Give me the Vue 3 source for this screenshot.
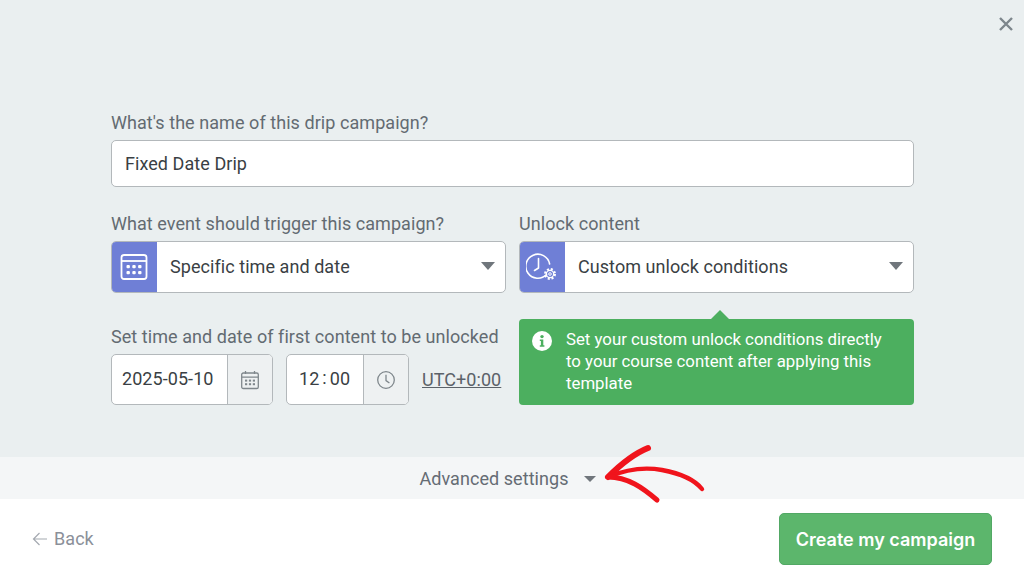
<script setup>
const fields = {
  name: 'Fixed Date Drip',
  trigger: 'Specific time and date',
  unlock: 'Custom unlock conditions',
  date: '2025-05-10',
  zone: 'UTC+0:00',
};
</script>

<template>
  <div class="modal">
    <svg class="close" viewBox="0 0 16 16" width="16" height="16">
      <path d="M2 2l12 12M14 2L2 14" stroke="#7d868c" stroke-width="2.4" fill="none" />
    </svg>

    <main class="body">
      <div class="field">
        <label class="label">What's the name of this drip campaign?</label>
        <div class="box name-input">{{ fields.name }}</div>
      </div>

      <div class="columns">
        <div class="field">
          <label class="label">What event should trigger this campaign?</label>
          <div class="box select">
            <span class="select-icon">
              <svg viewBox="0 0 28 28" width="28" height="28" fill="none" stroke="#fff" stroke-width="1.8">
                <rect x="1.5" y="2" width="25" height="24" rx="2.5" />
                <path d="M1.5 8h25" />
                <g fill="#fff" stroke="none">
                  <rect x="6.5" y="12" width="3.4" height="3.2" rx="1" />
                  <rect x="12.3" y="12" width="3.4" height="3.2" rx="1" />
                  <rect x="18.1" y="12" width="3.4" height="3.2" rx="1" />
                  <rect x="6.5" y="18" width="3.4" height="3.2" rx="1" />
                  <rect x="12.3" y="18" width="3.4" height="3.2" rx="1" />
                  <rect x="18.1" y="18" width="3.4" height="3.2" rx="1" />
                </g>
              </svg>
            </span>
            <span class="select-text">{{ fields.trigger }}</span>
            <span class="caret"></span>
          </div>
        </div>
        <div class="field">
          <label class="label">Unlock content</label>
          <div class="box select">
            <span class="select-icon">
              <svg viewBox="0 0 32 28" width="32" height="28" fill="none" stroke="#fff" stroke-width="1.6">
                <path d="M20.5 21.5A12 12 0 1 1 23.6 11" stroke-linecap="round" />
                <path d="M12.5 5.5v9.5l-4 2.5" stroke-linecap="round" stroke-linejoin="round" />
                <circle cx="24" cy="21" r="4.8" stroke-width="2.4" stroke-dasharray="2 1.8" />
                <circle cx="24" cy="21" r="3.6" stroke-width="1.2" />
                <circle cx="24" cy="21" r="1.3" stroke-width="1" />
              </svg>
            </span>
            <span class="select-text">{{ fields.unlock }}</span>
            <span class="caret"></span>
          </div>
        </div>
      </div>

      <div class="columns last">
        <div class="field">
          <label class="label">Set time and date of first content to be unlocked</label>
          <div class="when">
            <div class="box stamp date">
              <span class="stamp-value">{{ fields.date }}</span>
              <span class="stamp-icon">
                <svg viewBox="0 0 20 20" width="20" height="20" fill="none" stroke="#7f878c" stroke-width="1.3">
                  <rect x="1.7" y="3" width="16.6" height="15.5" rx="1.6" />
                  <path d="M1.7 7.2h16.6M5.5 1v3M14.5 1v3" />
                  <g fill="#7f878c" stroke="none">
                    <rect x="5" y="9.6" width="2.2" height="2" />
                    <rect x="8.9" y="9.6" width="2.2" height="2" />
                    <rect x="12.8" y="9.6" width="2.2" height="2" />
                    <rect x="5" y="13.2" width="2.2" height="2" />
                    <rect x="8.9" y="13.2" width="2.2" height="2" />
                    <rect x="12.8" y="13.2" width="2.2" height="2" />
                  </g>
                </svg>
              </span>
            </div>
            <div class="box stamp time">
              <span class="stamp-value">12<i class="colon">:</i>00</span>
              <span class="stamp-icon">
                <svg viewBox="0 0 20 20" width="20" height="20" fill="none" stroke="#7f878c" stroke-width="1.3">
                  <circle cx="10" cy="10" r="8.3" />
                  <path d="M10 4.8V10.6l3.4 2.4" />
                </svg>
              </span>
            </div>
            <a class="zone">{{ fields.zone }}</a>
          </div>
        </div>
        <div class="notice">
          <svg class="notice-icon" viewBox="0 0 20 20" width="20" height="20">
            <circle cx="10" cy="10" r="10" fill="#fff" />
            <circle cx="10" cy="5.6" r="1.7" fill="#4caf5f" />
            <path d="M7.8 8.6h3.5v5.6h1.1v1.5H7.8v-1.5h1.1V10.1H7.8z" fill="#4caf5f" />
          </svg>
          <p class="notice-text">Set your custom unlock conditions directly to your course content after applying this template</p>
        </div>
      </div>
    </main>

    <div class="advanced">
      <span>Advanced settings</span>
      <span class="caret small"></span>
    </div>

    <footer class="footer">
      <a class="back">
        <svg viewBox="0 0 16 14" width="16" height="14" fill="none" stroke="#a4a9b0" stroke-width="1.2">
          <path d="M15 7H1.5M7.5 1L1.5 7l6 6" />
        </svg>
        Back
      </a>
      <button class="create">Create my campaign</button>
    </footer>

    <!-- red annotation drawn over the screenshot -->
    <svg class="scribble" viewBox="0 0 110 64" width="110" height="64" fill="none" stroke="#f0141c" stroke-linecap="round" stroke-linejoin="round">
      <path d="M8 35C19 24 33 12 48 6" stroke-width="6" />
      <path d="M8 35C27 27 46 25 62 28C78 31 94 37 102 47" stroke-width="4.4" />
      <path d="M8 35C28 35 43 46 57 58" stroke-width="5" />
    </svg>
  </div>
</template>

<style scoped>
.modal {
  position: relative;
  width: 1024px;
  height: 575px;
  overflow: hidden;
  display: flex;
  flex-direction: column;
  background: #eaeff0;
  font-family: Roboto, "Liberation Sans", sans-serif;
  font-size: 18px;
  letter-spacing: 0.06px;
  color: #3a3f44;
}
.close {
  position: absolute;
  top: 16px;
  right: 10px;
}
.body {
  height: 457px;
  box-sizing: border-box;
  padding: 111px 110px 0 111px;
  display: flex;
  flex-direction: column;
  gap: 25px;
}
.field {
  display: flex;
  flex-direction: column;
  min-width: 0;
}
.label {
  height: 29px;
  line-height: 23px;
  color: #636b72;
  white-space: nowrap;
}
.box {
  box-sizing: border-box;
  background: #fff;
  border: 1px solid #b3b8bb;
  border-radius: 5px;
}
.name-input {
  height: 47px;
  line-height: 45px;
  padding-left: 13px;
}
.columns {
  display: grid;
  grid-template-columns: 395px 395px;
  column-gap: 13px;
}
.columns.last {
  margin-top: 7px;
  height: 80px;
}
.select {
  height: 52px;
  display: flex;
  align-items: center;
  overflow: hidden;
  padding-bottom: 2px;
}
.select-icon {
  width: 46px;
  align-self: stretch;
  margin: -1px 0 -3px -1px;
  background: #6f7fd6;
  display: flex;
  align-items: center;
  justify-content: center;
  flex: none;
}
.select-text {
  flex: 1;
  padding-left: 13px;
}
.caret {
  width: 0;
  height: 0;
  border-left: 7.5px solid transparent;
  border-right: 7.5px solid transparent;
  border-top: 8px solid #70767c;
  margin-right: 10px;
}
.caret.small {
  border-left-width: 6px;
  border-right-width: 6px;
  border-top-width: 6px;
  margin: 2px 0 0 15px;
}
.when {
  display: flex;
  align-items: center;
}
.stamp {
  height: 51px;
  display: flex;
  overflow: hidden;
}
.date {
  width: 162px;
}
.time {
  width: 123px;
  margin-left: 13px;
}
.stamp-value {
  flex: 1;
  line-height: 47px;
  padding-left: 10px;
  white-space: nowrap;
}
.time .stamp-value {
  padding-left: 12px;
}
.colon {
  font-style: normal;
  padding: 0 3px;
  position: relative;
  top: -1px;
}
.stamp-icon {
  width: 44px;
  flex: none;
  background: #eef1f2;
  border-left: 1px solid #b3b8bb;
  display: flex;
  align-items: center;
  justify-content: center;
}
.zone {
  margin-left: 13px;
  color: #5b6269;
  text-decoration: underline;
}
.notice {
  position: relative;
  align-self: start;
  box-sizing: border-box;
  height: 86px;
  margin-top: -6px;
  padding: 9px 24px 0 13px;
  display: flex;
  gap: 14px;
  background: #4caf5f;
  border-radius: 4px;
  color: #fff;
  font-size: 16.8px;
  letter-spacing: 0;
}
.notice::before {
  content: "";
  position: absolute;
  top: -9px;
  left: 192px;
  border-left: 9px solid transparent;
  border-right: 9px solid transparent;
  border-bottom: 9px solid #4caf5f;
}
.notice-icon {
  flex: none;
  margin-top: 3px;
}
.notice-text {
  margin: 0;
  line-height: 22px;
}
.advanced {
  height: 42px;
  display: flex;
  align-items: center;
  justify-content: center;
  padding-right: 9px;
  background: #f4f6f7;
  color: #656c74;
}
.footer {
  flex: 1;
  display: flex;
  align-items: center;
  justify-content: space-between;
  padding: 0 32px;
  background: #fff;
}
.back {
  display: flex;
  align-items: center;
  gap: 6px;
  margin-top: 3px;
  color: #8b9099;
}
.create {
  width: 213px;
  height: 52px;
  margin-top: 4px;
  border: 1px solid #52a865;
  border-radius: 5px;
  background: #5cb66c;
  color: #fff;
  font-family: Inter, Roboto, sans-serif;
  font-size: 18px;
  font-weight: 600;
  letter-spacing: 0;
}
.scribble {
  position: absolute;
  left: 600px;
  top: 442px;
}
</style>
